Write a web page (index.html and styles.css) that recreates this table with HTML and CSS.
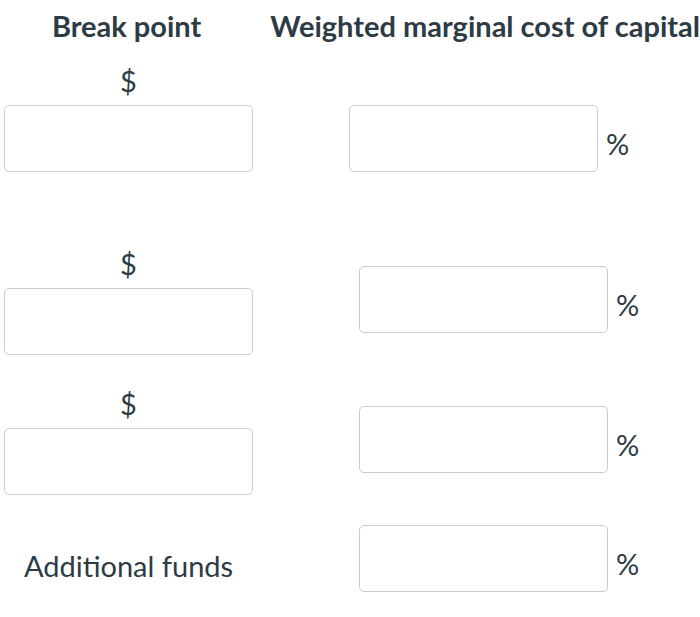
FILE: index.html
```html
<!DOCTYPE html>
<html>
<head>
<meta charset="utf-8">
<link rel="stylesheet" href="styles.css">
</head>
<body>
<div class="page">
  <div class="header">
    <div class="hcell-left">Break point</div>
    <div class="hcell-right">Weighted marginal cost of capital</div>
  </div>

  <div class="row row1">
    <div class="left">
      <div class="label">$</div>
      <div class="box"></div>
    </div>
    <div class="right right1">
      <div class="box"></div>
      <div class="pct">%</div>
    </div>
  </div>

  <div class="row row2">
    <div class="left">
      <div class="label">$</div>
      <div class="box"></div>
    </div>
    <div class="right">
      <div class="box"></div>
      <div class="pct">%</div>
    </div>
  </div>

  <div class="row row3">
    <div class="left">
      <div class="label">$</div>
      <div class="box"></div>
    </div>
    <div class="right">
      <div class="box"></div>
      <div class="pct">%</div>
    </div>
  </div>

  <div class="row row4">
    <div class="left">
      <div class="label label-text">Additional funds</div>
    </div>
    <div class="right right4">
      <div class="box"></div>
      <div class="pct">%</div>
    </div>
  </div>
</div>
</body>
</html>
```

FILE: styles.css
```css
html, body {
  margin: 0;
  padding: 0;
  background: #ffffff;
}

.page {
  font-family: Lato, "Liberation Sans", sans-serif;
  color: #2d3b45;
  width: 700px;
  height: 617px;
  overflow: hidden;
}

.header {
  display: flex;
  padding-top: 8px;
  height: 35px;
  font-size: 29px;
  line-height: 35px;
  font-weight: 700;
  white-space: nowrap;
}

.hcell-left {
  width: 249px;
  margin-left: 7px;
  text-align: center;
}

.hcell-right {
  margin-left: 24px;
}

.row {
  display: flex;
  align-items: flex-start;
}

.row1 { margin-top: 20px; }
.row2 { margin-top: 74px; }
.row3 { margin-top: 31px; }
.row4 { margin-top: 30px; }

.left {
  width: 249px;
  margin-left: 4px;
  display: flex;
  flex-direction: column;
  align-items: center;
}

.label {
  font-size: 29px;
  line-height: 35px;
  height: 35px;
  margin-bottom: 7px;
  white-space: nowrap;
}

.label-text {
  margin-top: 23px;
  margin-bottom: 0;
}

.box {
  width: 249px;
  height: 67px;
  box-sizing: border-box;
  border: 1px solid #c7cdd1;
  border-radius: 5px;
  background: #ffffff;
}

.right {
  display: flex;
  align-items: flex-start;
  margin-left: 106px;
  margin-top: 20px;
}

.right1 {
  margin-left: 96px;
  margin-top: 42px;
}

.right4 {
  margin-top: 0;
}

.pct {
  font-size: 29px;
  line-height: 35px;
  margin-left: 8px;
  margin-top: 21px;
}
```
